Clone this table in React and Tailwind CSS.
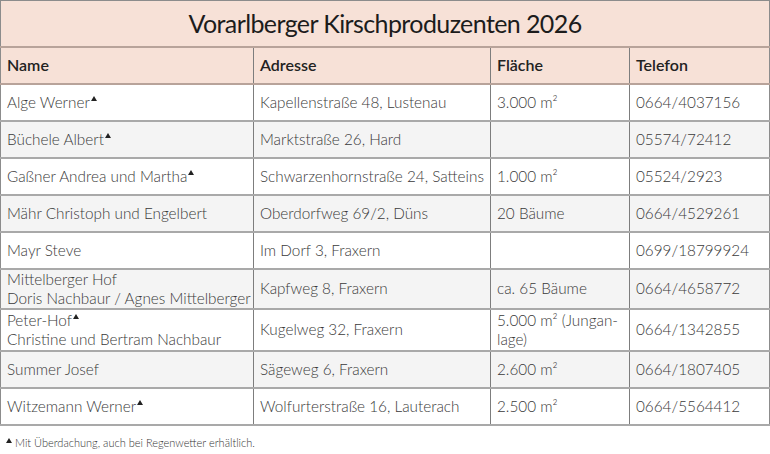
const rows = [
  { name: ["Alge Werner"], roof: true, address: "Kapellenstraße 48, Lustenau", area: ["3.000 m²"], phone: "0664/4037156" },
  { name: ["Büchele Albert"], roof: true, address: "Marktstraße 26, Hard", area: [], phone: "05574/72412" },
  { name: ["Gaßner Andrea und Martha"], roof: true, address: "Schwarzenhornstraße 24, Satteins", area: ["1.000 m²"], phone: "05524/2923" },
  { name: ["Mähr Christoph und Engelbert"], address: "Oberdorfweg 69/2, Düns", area: ["20 Bäume"], phone: "0664/4529261" },
  { name: ["Mayr Steve"], address: "Im Dorf 3, Fraxern", area: [], phone: "0699/18799924" },
  { name: ["Mittelberger Hof", "Doris Nachbaur / Agnes Mittelberger"], address: "Kapfweg 8, Fraxern", area: ["ca. 65 Bäume"], phone: "0664/4658772", h: "h-[37px]" },
  { name: ["Peter-Hof", "Christine und Bertram Nachbaur"], roof: true, address: "Kugelweg 32, Fraxern", area: ["5.000 m² (Jungan-", "lage)"], phone: "0664/1342855", h: "h-[42px]" },
  { name: ["Summer Josef"], address: "Sägeweg 6, Fraxern", area: ["2.600 m²"], phone: "0664/1807405" },
  { name: ["Witzemann Werner"], roof: true, address: "Wolfurterstraße 16, Lauterach", area: ["2.500 m²"], phone: "0664/5564412" },
];

function Roof() {
  return (
    <span className="inline-block align-top mt-[3px] ml-[1px] w-0 h-0 border-l-[3px] border-r-[3px] border-b-[5px] border-l-transparent border-r-transparent border-b-[#222]" />
  );
}

export default function App() {
  return (
    <div className="w-[770px] h-[454px] bg-white font-['Lato','Liberation_Sans',sans-serif] text-[#3a3a3a]">
      <table className="w-[769px] table-fixed border-collapse border border-[#8c8c8c]">
        <colgroup>
          <col className="w-[253px]" />
          <col className="w-[237px]" />
          <col className="w-[139px]" />
          <col className="w-[140px]" />
        </colgroup>
        <thead>
          <tr className="h-[46px] bg-[#f7e1d7] border-b-2 border-[#b8a39a]">
            <th colSpan={4} className="text-center text-[25px] tracking-[-0.6px] font-normal text-[#1c1c1c]">
              Vorarlberger Kirschproduzenten 2026
            </th>
          </tr>
          <tr className="h-[37px] bg-[#f7e1d7] border-b-2 border-[#b8a39a] text-[16px] text-[#222]">
            {["Name", "Adresse", "Fläche", "Telefon"].map((t, i) => (
              <th key={t} className={`text-left font-semibold px-[6px] ${i > 0 ? "border-l border-[#7d7d7d]" : ""}`}>
                {t}
              </th>
            ))}
          </tr>
        </thead>
        <tbody className="text-[15.3px] leading-[19px] font-light">
          {rows.map((r, i) => (
            <tr key={i} className={`${r.h || "h-[37px]"} ${i % 2 ? "bg-[#f4f4f4]" : "bg-white"} border-b-2 border-[#a9a9a9]`}>
              <td className="pl-[6px] pr-0 whitespace-nowrap">
                {r.name.map((n, j) => (
                  <div key={j}>
                    {n}
                    {j === 0 && r.roof && <Roof />}
                  </div>
                ))}
              </td>
              <td className="pl-[6px] pr-0 whitespace-nowrap border-l border-[#7d7d7d]">{r.address}</td>
              <td className="px-[6px] whitespace-nowrap border-l border-[#7d7d7d]">
                {r.area.map((a, j) => (
                  <div key={j}>{a}</div>
                ))}
              </td>
              <td className="px-[6px] border-l border-[#7d7d7d]">{r.phone}</td>
            </tr>
          ))}
        </tbody>
      </table>
      <div className="mt-[9px] ml-[6px] text-[11px] font-light text-[#333] flex items-start">
        <span className="inline-block mt-[3px] mr-[3px] w-0 h-0 border-l-[3px] border-r-[3px] border-b-[5px] border-l-transparent border-r-transparent border-b-[#222]" />
        Mit Überdachung, auch bei Regenwetter erhältlich.
      </div>
    </div>
  );
}
